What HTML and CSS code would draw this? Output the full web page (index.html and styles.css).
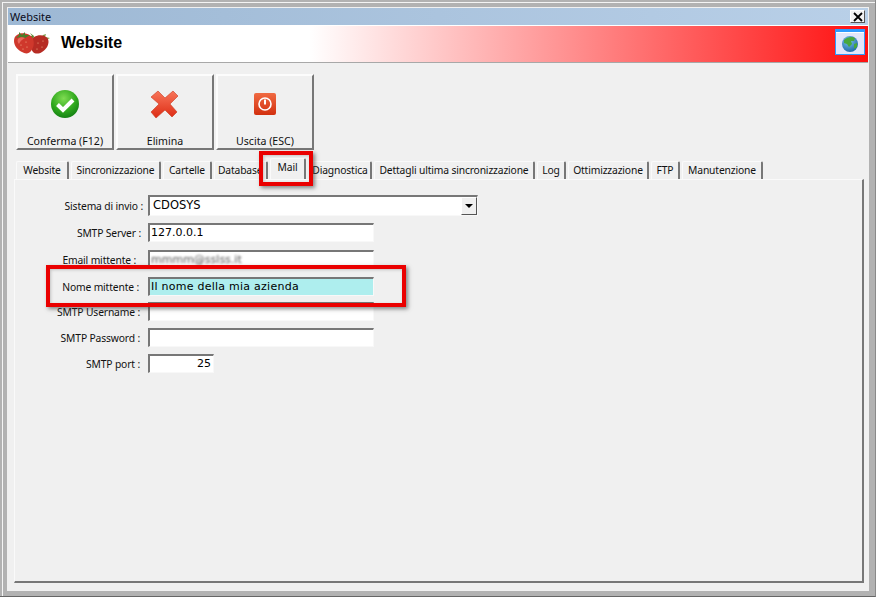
FILE: index.html
```html
<!DOCTYPE html>
<html lang="it">
<head>
<meta charset="utf-8">
<title>Website</title>
<link rel="stylesheet" href="styles.css">
</head>
<body>
<div class="screen">
  <div class="screen-inner">
    <div class="window">
      <div class="titlebar">
        <span class="title-text">Website</span>
        <span class="close"><svg width="10" height="10" viewBox="0 0 10 10"><path d="M1 1L9 9M9 1L1 9" stroke="#000" stroke-width="1.8" fill="none"/></svg></span>
      </div>
      <div class="banner">
        <svg class="berries" width="38" height="24" viewBox="0 0 38 24">
          <path d="M21 5l-4-3 2 3-3 0 3 2 1 3z" fill="#5a8a30"/>
          <path d="M30 4l3-1-1 3 5 1-4 2 1 4-4-3-4 1z" fill="#7d9c4a"/>
          <path d="M21 6c5-3 12-2 14 2 2 5-2 11-6 13-3 2-7 2-9 0-3-3-3-12 1-15z" fill="#b62c24"/>
          <path d="M4 4c4-3 12-2 15 2 3 5 2 10-1 14-2 3-6 3-9 1C5 19 1 15 1 10c0-3 1-5 3-6z" fill="#cf382c"/>
          <path d="M6 1l3 3 3-3 0 3 5 0-5 3-4-1-5 1 3-3z" fill="#4c7d2a"/>
          <path d="M5 8c2-2 5-2 7-1-2 1-5 3-6 6-1-1-2-3-1-5z" fill="#e8695c"/>
          <g fill="#f3b58c"><circle cx="8" cy="14" r=".6"/><circle cx="13" cy="11" r=".6"/><circle cx="14" cy="16" r=".6"/><circle cx="10" cy="18" r=".6"/><circle cx="25" cy="12" r=".6"/><circle cx="30" cy="10" r=".6"/><circle cx="29" cy="16" r=".6"/><circle cx="24" cy="18" r=".6"/></g>
        </svg>
        <span class="banner-title">Website</span>
        <span class="globe-box">
          <svg width="30" height="26" viewBox="0 0 30 26">
            <defs><radialGradient id="gl" cx=".4" cy=".3" r=".8"><stop offset="0" stop-color="#7fc4ee"/><stop offset="1" stop-color="#14609f"/></radialGradient></defs>
            <rect x=".5" y=".5" width="29" height="25" fill="#e2e6fb" stroke="#2f9bff"/>
            <rect x="0" y="0" width="30" height="3" fill="#2f9bff"/>
            <rect x="1" y="3" width="28" height="1" fill="#fff"/>
            <circle cx="15" cy="15" r="8" fill="url(#gl)"/>
            <path d="M9 11c3-3 8-4 11-2l-1 3-3 0 1 3-3 3-2-3-3-1zM19 15l3-1 0 4-3 2z" fill="#49a83c"/>
          </svg>
        </span>
      </div>
      <div class="content">
        <div class="toolbar">
          <button class="tool">
            <span class="tool-icon"><svg width="30" height="30" viewBox="0 0 30 30">
              <defs><radialGradient id="g" cx=".45" cy=".3" r=".8"><stop offset="0" stop-color="#7fdc52"/><stop offset=".55" stop-color="#2fa81d"/><stop offset="1" stop-color="#0b7310"/></radialGradient></defs>
              <circle cx="15" cy="15" r="14" fill="url(#g)"/>
              <path d="M7.5 15.5l5.5 5.5 10-10" fill="none" stroke="#fff" stroke-width="4"/>
            </svg></span>
            <span>Conferma (F12)</span>
          </button>
          <button class="tool">
            <span class="tool-icon"><svg width="30" height="30" viewBox="0 0 30 30">
              <defs><linearGradient id="x" x1="0" y1="0" x2="0" y2="1"><stop offset="0" stop-color="#f8755a"/><stop offset="1" stop-color="#dd2c14"/></linearGradient></defs>
              <path d="M8 2l7 7 8-7 5 5-8 8 7 8-5 5-7-7-9 8-5-6 8-8-8-7z" fill="url(#x)" stroke="#c9391f" stroke-width=".6"/>
            </svg></span>
            <span>Elimina</span>
          </button>
          <button class="tool">
            <span class="tool-icon"><svg width="30" height="30" viewBox="0 0 30 30">
              <defs><linearGradient id="p" x1="0" y1="0" x2="0" y2="1"><stop offset="0" stop-color="#f06a42"/><stop offset="1" stop-color="#d2300f"/></linearGradient></defs>
              <rect x="4" y="4" width="22" height="22" rx="2" fill="url(#p)"/>
              <circle cx="15" cy="15" r="6" fill="none" stroke="#fff" stroke-width="1.6"/>
              <path d="M15 10.5v5" stroke="#fff" stroke-width="2"/>
            </svg></span>
            <span>Uscita (ESC)</span>
          </button>
        </div>
        <div class="tabs">
          <span class="tab w-website">Website</span>
          <span class="tab w-sync">Sincronizzazione</span>
          <span class="tab w-folders">Cartelle</span>
          <span class="tab w-db">Database</span>
          <span class="tab tab-active">Mail</span>
          <span class="tab w-diag">Diagnostica</span>
          <span class="tab w-last">Dettagli ultima sincronizzazione</span>
          <span class="tab w-log">Log</span>
          <span class="tab w-opt">Ottimizzazione</span>
          <span class="tab w-ftp">FTP</span>
          <span class="tab w-man">Manutenzione</span>
        </div>
        <div class="panel">
          <div class="row row-select">
            <label class="label lab-select">Sistema di invio :</label>
            <div class="field select"><span class="select-value">CDOSYS</span><span class="arrow"></span></div>
          </div>
          <div class="row row-server">
            <label class="label lab-server">SMTP Server :</label>
            <div class="field">127.0.0.1</div>
          </div>
          <div class="row row-email">
            <label class="label lab-email">Email mittente :</label>
            <div class="field"><span class="blurred">mmmm@sslss.it</span></div>
          </div>
          <div class="row row-name">
            <label class="label lab-name">Nome mittente :</label>
            <div class="field field-hl">Il nome della mia azienda</div>
          </div>
          <div class="row row-user">
            <label class="label lab-user">SMTP Username :</label>
            <div class="field"></div>
          </div>
          <div class="row row-pass">
            <label class="label lab-user">SMTP Password :</label>
            <div class="field"></div>
          </div>
          <div class="row row-port">
            <label class="label lab-user">SMTP port :</label>
            <div class="field field-port">25</div>
          </div>
        </div>
        <div class="mark mark-tab"></div>
        <div class="mark mark-name"></div>
      </div>
    </div>
  </div>
</div>
</body>
</html>
```

FILE: styles.css
```css
* { box-sizing: border-box; }
html, body { margin: 0; padding: 0; }
body {
  width: 876px;
  height: 597px;
  overflow: hidden;
  font-family: "Noto Sans", Arial, sans-serif;
  font-size: 10.3px;
  letter-spacing: -.15px;
  color: #111;
}
.screen {
  width: 876px;
  height: 597px;
  background: #b2b2b2;
  border-bottom: 1px solid #666;
  border-right: 1px solid #8a8a8a;
  padding: 2px 0 0 2px;
}
.screen-inner {
  height: 100%;
  border-top: 1px solid #f4f4f4;
  border-left: 1px solid #f4f4f4;
  padding: 4px 6px 5px 4px;
}
.window {
  height: 100%;
  background: #f0f0f0;
  padding: 1px;
  display: flex;
  flex-direction: column;
}
.titlebar {
  height: 17px;
  flex: none;
  background: linear-gradient(to right, #9db8d4, #b9d0e8);
  display: flex;
  align-items: center;
  justify-content: space-between;
  padding: 0 3px 0 2px;
  font-size: 11px;
  letter-spacing: 0;
  color: #0c0c20;
}
.close {
  width: 15px;
  height: 13px;
  background: #f2f2f2;
  border: 1px solid;
  border-color: #fff #555 #555 #fff;
  display: flex;
  align-items: center;
  justify-content: center;
}
.banner {
  height: 38px;
  flex: none;
  border-top: 1px solid #fff;
  border-bottom: 1px solid #a8a8a8;
  background: linear-gradient(to right, #fff 35%, #ff1010 100%);
  display: flex;
  align-items: center;
  padding: 0 3px 0 5px;
}
.berries { flex: none; margin-top: -2px; }
.banner-title {
  margin-left: 10px;
  margin-top: -2px;
  font-family: "Liberation Sans", Arial, sans-serif;
  font-size: 16px;
  font-weight: bold;
  letter-spacing: 0;
  color: #000;
  flex: 1;
}
.globe-box { display: flex; margin-top: -5px; }
.content {
  position: relative;
  flex: 1;
  padding: 11px 4px 7px 6px;
  display: flex;
  flex-direction: column;
}
.toolbar { display: flex; gap: 2px; padding-left: 2px; height: 76px; flex: none; }
.tool {
  width: 98px;
  height: 76px;
  padding: 0;
  background: #f0f0f0;
  border: 2px solid;
  border-color: #fcfcfc #777 #777 #fcfcfc;
  font: inherit;
  font-size: 10.6px;
  letter-spacing: 0;
  color: #111;
  display: flex;
  flex-direction: column;
  align-items: center;
}
.tool-icon { height: 30px; margin: 13px 0 15px; display: flex; }
.tabs {
  height: 29px;
  flex: none;
  padding-left: 2px;
  display: flex;
  align-items: flex-end;
  gap: 2px;
}
.tab {
  height: 18px;
  padding-top: 1px;
  border: 1px solid #fafafa;
  border-bottom: 0;
  border-right: 2px solid #777;
  border-radius: 2px 2px 0 0;
  text-align: center;
  white-space: nowrap;
  flex: none;
}
.w-website { width: 53px; }
.w-sync { width: 90px; }
.w-folders { width: 49px; }
.w-db { width: 54px; text-align: left; padding-left: 3px; }
.tab-active {
  width: 36px;
  height: 21px;
  margin-right: 1px;
}
.w-diag { width: 63px; border-left-color: transparent; }
.w-last { width: 161px; }
.w-log { width: 29px; }
.w-opt { width: 81px; }
.w-ftp { width: 29px; }
.w-man { width: 81px; }
.panel {
  flex: 1;
  border: 1px solid #fafafa;
  border-right: 2px solid #777;
  border-bottom: 2px solid #777;
  padding-top: 15px;
  display: flex;
  flex-direction: column;
}
.row { display: flex; align-items: center; height: 19px; }
.row-select { height: 21px; }
.row-server { margin-top: 7px; }
.row-email { margin-top: 8px; }
.row-name { margin-top: 8px; }
.row-user { margin-top: 6px; }
.row-pass { margin-top: 7px; }
.row-port { margin-top: 7px; }
.label { width: 133px; text-align: right; white-space: nowrap; flex: none; }
.lab-select { padding-right: 5px; }
.lab-server { padding-right: 7px; }
.lab-email { padding-right: 12px; }
.lab-name { padding-right: 9px; }
.lab-user { padding-right: 8px; }
.field {
  width: 226px;
  height: 100%;
  background: #fff;
  border: 2px solid;
  border-color: #777 #f8f8f8 #f8f8f8 #777;
  border-bottom-width: 1px;
  border-right-width: 1px;
  font-family: "DejaVu Sans", sans-serif;
  font-size: 11px;
  letter-spacing: 0;
  line-height: 16px;
  padding-left: 1px;
  color: #000;
  white-space: nowrap;
  overflow: hidden;
}
.select {
  width: 330px;
  display: flex;
  justify-content: space-between;
  align-items: stretch;
}
.select-value { padding-left: 2px; font-size: 11.5px; line-height: 17px; }
.arrow {
  width: 16px;
  background: #f0f0f0;
  border: 1px solid;
  border-color: #fff #555 #555 #fff;
  position: relative;
}
.arrow::after {
  content: "";
  position: absolute;
  left: 3px;
  top: 6px;
  border-left: 4px solid transparent;
  border-right: 4px solid transparent;
  border-top: 4px solid #000;
}
.blurred { filter: blur(1.1px); display: inline-block; color: #555; }
.field-hl { background: #aeeeee; letter-spacing: .25px; }
.field-port { width: 66px; text-align: right; padding-right: 2px; }
.mark {
  position: absolute;
  border: 4px solid #ea0000;
  box-shadow: 2px 2px 4px rgba(60, 60, 60, .6), inset 1px 1px 3px rgba(60, 60, 60, .25);
  pointer-events: none;
}
.mark-tab { left: 251px; top: 88px; width: 54px; height: 35px; }
.mark-name { left: 38px; top: 202px; width: 360px; height: 42px; }
```
